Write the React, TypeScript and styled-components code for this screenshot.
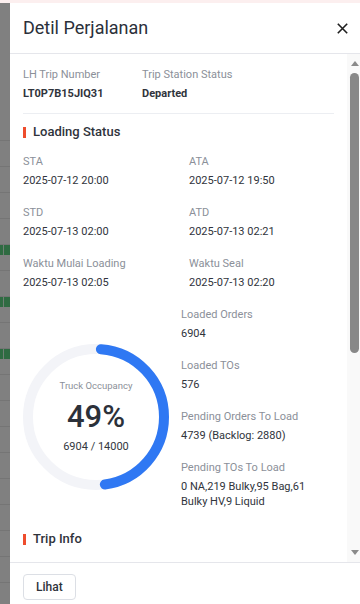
import React from "react";
import styled, { createGlobalStyle } from "styled-components";

const Global = createGlobalStyle`
  html, body { margin: 0; padding: 0; height: 100%; overflow: hidden; }
  body { font-family: Roboto, "Noto Sans", Arial, sans-serif; background: #fff; }
  #root { height: 100%; }
  * { box-sizing: border-box; }
`;

const Page = styled.div`
  height: 604px;
  display: flex;
  flex-direction: column;
`;

const TopBand = styled.div`
  height: 3px;
  flex: none;
  background: #fcefef;
`;

const Body = styled.div`
  flex: 1;
  min-height: 0;
  display: flex;
`;

const Backdrop = styled.div`
  width: 10px;
  flex: none;
  background: #808080;
  padding-top: 137px;
  display: flex;
  flex-direction: column;
  overflow: hidden;
`;

const BackdropRow = styled.div<{ $green?: boolean }>`
  height: 26px;
  flex: none;
  border-top: 1px solid #757575;
  display: flex;
  &::before {
    content: "";
    display: ${(p) => (p.$green ? "block" : "none")};
    width: 10px;
    height: 10px;
    background: linear-gradient(90deg, #2f6b42 0 3px, #6f7f74 3px 4px, #2f6b42 4px);
  }
`;

const Drawer = styled.div`
  flex: 1;
  min-width: 0;
  background: #fff;
  display: flex;
  flex-direction: column;
`;

const Header = styled.div`
  height: 51px;
  flex: none;
  display: flex;
  align-items: center;
  justify-content: space-between;
  padding: 0 11px 0 13px;
  border-bottom: 1px solid #e5e6eb;
`;

const Title = styled.h1`
  margin: 0;
  font-size: 18px;
  font-weight: 400;
  line-height: 24px;
  color: #2b303a;
`;

const CloseButton = styled.button`
  border: 0;
  background: transparent;
  padding: 0;
  width: 14px;
  height: 14px;
  display: flex;
  align-items: center;
  justify-content: center;
  cursor: pointer;
  color: #1f1f1f;
`;

const ScrollArea = styled.div`
  flex: 1;
  min-height: 0;
  display: flex;
`;

const Content = styled.div`
  flex: 1;
  min-width: 0;
  overflow: hidden;
  padding: 13px 13px 0 13px;
`;

const Rail = styled.div`
  width: 13px;
  flex: none;
  background: #f9f9f9;
  display: flex;
  flex-direction: column;
  align-items: flex-end;
  padding: 7px 1px 7px 0;
`;

const RailArrow = styled.div<{ $down?: boolean }>`
  width: 0;
  height: 0;
  border-left: 4.5px solid transparent;
  border-right: 4.5px solid transparent;
  ${(p) =>
    p.$down
      ? "border-top: 5px solid #8a8a8a; margin-top: auto;"
      : "border-bottom: 5px solid #8a8a8a;"}
`;

const RailThumb = styled.div`
  width: 9px;
  height: 280px;
  margin-top: 7px;
  border-radius: 4.5px;
  background: #888888;
`;

const InfoRow = styled.div`
  display: flex;
`;

const InfoCol = styled.div<{ $w?: number }>`
  width: ${(p) => (p.$w ? `${p.$w}px` : "auto")};
  display: flex;
  flex-direction: column;
`;

const Label = styled.div`
  font-size: 11px;
  line-height: 16px;
  color: #8b9099;
`;

const Value = styled.div<{ $bold?: boolean; $lh?: number }>`
  margin-top: 3px;
  font-size: 11px;
  font-weight: ${(p) => (p.$bold ? 700 : 400)};
  line-height: ${(p) => p.$lh ?? 16}px;
  color: #30343c;
`;

const Divider = styled.div`
  height: 1px;
  background: #eceef2;
  margin-top: 11px;
`;

const SectionTitle = styled.div<{ $mt: number }>`
  margin-top: ${(p) => p.$mt}px;
  display: flex;
  align-items: center;
  gap: 7px;
  font-size: 13px;
  font-weight: 500;
  line-height: 20px;
  color: #2f333b;
  &::before {
    content: "";
    width: 3px;
    height: 11px;
    background: #ee4d2d;
  }
`;

const Grid = styled.div`
  margin-top: 12px;
  display: grid;
  grid-template-columns: 166px 1fr;
  row-gap: 16px;
`;

const Field = styled.div`
  display: flex;
  flex-direction: column;
`;

const LoadBlock = styled.div`
  margin-top: 16px;
  display: flex;
`;

const DonutWrap = styled.div`
  width: 158px;
  flex: none;
  padding-top: 37px;
`;

const Donut = styled.div`
  width: 146px;
  height: 146px;
  display: grid;
  & > * { grid-area: 1 / 1; }
`;

const DonutText = styled.div`
  display: flex;
  flex-direction: column;
  align-items: center;
  justify-content: center;
`;

const DonutCaption = styled.div`
  font-size: 9.5px;
  line-height: 14px;
  color: #8b9099;
`;

const DonutPercent = styled.div`
  margin-top: 6px;
  font-size: 31px;
  font-weight: 500;
  line-height: 36px;
  color: #2c313a;
`;

const DonutCount = styled.div`
  margin-top: 4px;
  font-size: 11px;
  line-height: 16px;
  color: #333840;
`;

const SideList = styled.div`
  width: 145px;
  display: flex;
  flex-direction: column;
  gap: 16px;
`;

const Footer = styled.div`
  flex: none;
  height: 42px;
  border-top: 1px solid #e5e6eb;
  padding: 11px 13px 0;
`;

const Button = styled.button`
  height: 26px;
  padding: 0 12px;
  border: 1px solid #dcdfe5;
  border-radius: 4px;
  background: #fff;
  font-family: inherit;
  font-size: 12px;
  font-weight: 500;
  color: #2f333b;
  cursor: pointer;
`;

const times = [
  ["STA", "2025-07-12 20:00"],
  ["ATA", "2025-07-12 19:50"],
  ["STD", "2025-07-13 02:00"],
  ["ATD", "2025-07-13 02:21"],
  ["Waktu Mulai Loading", "2025-07-13 02:05"],
  ["Waktu Seal", "2025-07-13 02:20"],
];

const side: [string, string, number?][] = [
  ["Loaded Orders", "6904"],
  ["Loaded TOs", "576"],
  ["Pending Orders To Load", "4739 (Backlog: 2880)"],
  ["Pending TOs To Load", "0 NA,219 Bulky,95 Bag,61 Bulky HV,9 Liquid", 15],
];

function OccupancyRing({ pct }: { pct: number }) {
  const r = 68;
  const c = 2 * Math.PI * r;
  const cap = 5;
  const len = Math.max(0, c * pct - cap * 2);
  return (
    <svg width="146" height="146" viewBox="0 0 146 146">
      <circle cx="73" cy="73" r={r} fill="none" stroke="#f3f4f8" strokeWidth="10" />
      <circle
        cx="73"
        cy="73"
        r={r}
        fill="none"
        stroke="#2f78f3"
        strokeWidth="10"
        strokeLinecap="round"
        strokeDasharray={`${len} ${c}`}
        strokeDashoffset={-cap}
        transform="rotate(-90 73 73)"
      />
    </svg>
  );
}

export default function App() {
  const greenRows = [4, 6, 8];
  return (
    <Page>
      <Global />
      <TopBand />
      <Body>
        <Backdrop>
          {Array.from({ length: 18 }).map((_, i) => (
            <BackdropRow key={i} $green={greenRows.includes(i)} />
          ))}
        </Backdrop>
        <Drawer>
          <Header>
            <Title>Detil Perjalanan</Title>
            <CloseButton aria-label="close">
              <svg width="11" height="11" viewBox="0 0 11 11">
                <path d="M0.8 0.8L10.2 10.2M10.2 0.8L0.8 10.2" stroke="currentColor" strokeWidth="1.6" />
              </svg>
            </CloseButton>
          </Header>
          <ScrollArea>
            <Content>
              <InfoRow>
                <InfoCol $w={119}>
                  <Label>LH Trip Number</Label>
                  <Value $bold>LT0P7B15JIQ31</Value>
                </InfoCol>
                <InfoCol>
                  <Label>Trip Station Status</Label>
                  <Value $bold>Departed</Value>
                </InfoCol>
              </InfoRow>
              <Divider />
              <SectionTitle $mt={8}>Loading Status</SectionTitle>
              <Grid>
                {times.map(([l, v]) => (
                  <Field key={l}>
                    <Label>{l}</Label>
                    <Value>{v}</Value>
                  </Field>
                ))}
              </Grid>
              <LoadBlock>
                <DonutWrap>
                  <Donut>
                    <OccupancyRing pct={0.49} />
                    <DonutText>
                      <DonutCaption>Truck Occupancy</DonutCaption>
                      <DonutPercent>49%</DonutPercent>
                      <DonutCount>6904 / 14000</DonutCount>
                    </DonutText>
                  </Donut>
                </DonutWrap>
                <SideList>
                  {side.map(([l, v, lh]) => (
                    <Field key={l}>
                      <Label>{l}</Label>
                      <Value $lh={lh}>{v}</Value>
                    </Field>
                  ))}
                </SideList>
              </LoadBlock>
              <SectionTitle $mt={20}>Trip Info</SectionTitle>
            </Content>
            <Rail>
              <RailArrow />
              <RailThumb />
              <RailArrow $down />
            </Rail>
          </ScrollArea>
          <Footer>
            <Button>Lihat</Button>
          </Footer>
        </Drawer>
      </Body>
    </Page>
  );
}
